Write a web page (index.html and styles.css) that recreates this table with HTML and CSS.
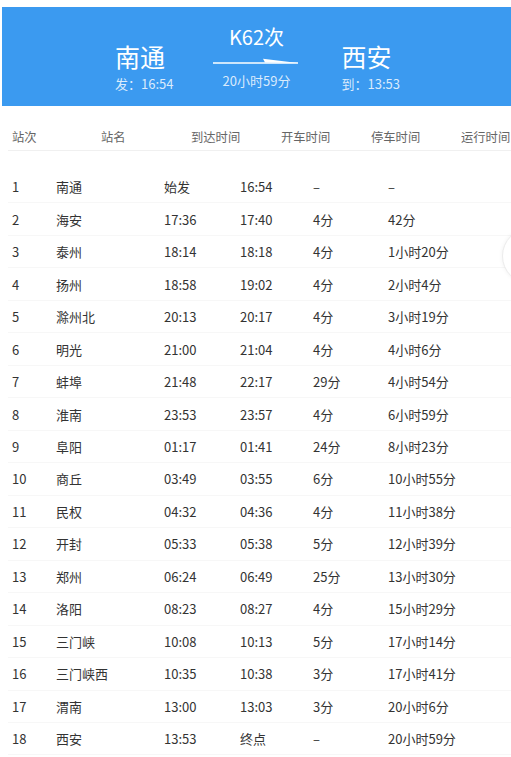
FILE: index.html
```html
<!DOCTYPE html>
<html lang="zh">
<head>
<meta charset="utf-8">
<link rel="stylesheet" href="styles.css">
</head>
<body>
<div class="page">
  <header class="banner">
    <div class="stop">
      <div class="city">南通</div>
      <div class="sub">发：16:54</div>
    </div>
    <div class="mid">
      <div class="train">K62次</div>
      <svg class="arrow" width="86" height="10" viewBox="0 0 86 10">
        <path d="M0 6 H85" stroke="#fff" stroke-width="1.6" fill="none"/>
        <path d="M50 1.8 L85 6 L52 5.6 Z" fill="#fff"/>
      </svg>
      <div class="sub">20小时59分</div>
    </div>
    <div class="stop">
      <div class="city">西安</div>
      <div class="sub">到：13:53</div>
    </div>
  </header>

  <div class="thead">
    <span>站次</span><span>站名</span><span>到达时间</span><span>开车时间</span><span>停车时间</span><span>运行时间</span>
  </div>

  <div class="tbody">
    <div class="row"><span>1</span><span>南通</span><span>始发</span><span>16:54</span><span>–</span><span>–</span></div>
    <div class="row"><span>2</span><span>海安</span><span>17:36</span><span>17:40</span><span>4分</span><span>42分</span></div>
    <div class="row"><span>3</span><span>泰州</span><span>18:14</span><span>18:18</span><span>4分</span><span>1小时20分</span></div>
    <div class="row"><span>4</span><span>扬州</span><span>18:58</span><span>19:02</span><span>4分</span><span>2小时4分</span></div>
    <div class="row"><span>5</span><span>滁州北</span><span>20:13</span><span>20:17</span><span>4分</span><span>3小时19分</span></div>
    <div class="row"><span>6</span><span>明光</span><span>21:00</span><span>21:04</span><span>4分</span><span>4小时6分</span></div>
    <div class="row"><span>7</span><span>蚌埠</span><span>21:48</span><span>22:17</span><span>29分</span><span>4小时54分</span></div>
    <div class="row"><span>8</span><span>淮南</span><span>23:53</span><span>23:57</span><span>4分</span><span>6小时59分</span></div>
    <div class="row"><span>9</span><span>阜阳</span><span>01:17</span><span>01:41</span><span>24分</span><span>8小时23分</span></div>
    <div class="row"><span>10</span><span>商丘</span><span>03:49</span><span>03:55</span><span>6分</span><span>10小时55分</span></div>
    <div class="row"><span>11</span><span>民权</span><span>04:32</span><span>04:36</span><span>4分</span><span>11小时38分</span></div>
    <div class="row"><span>12</span><span>开封</span><span>05:33</span><span>05:38</span><span>5分</span><span>12小时39分</span></div>
    <div class="row"><span>13</span><span>郑州</span><span>06:24</span><span>06:49</span><span>25分</span><span>13小时30分</span></div>
    <div class="row"><span>14</span><span>洛阳</span><span>08:23</span><span>08:27</span><span>4分</span><span>15小时29分</span></div>
    <div class="row"><span>15</span><span>三门峡</span><span>10:08</span><span>10:13</span><span>5分</span><span>17小时14分</span></div>
    <div class="row"><span>16</span><span>三门峡西</span><span>10:35</span><span>10:38</span><span>3分</span><span>17小时41分</span></div>
    <div class="row"><span>17</span><span>渭南</span><span>13:00</span><span>13:03</span><span>3分</span><span>20小时6分</span></div>
    <div class="row"><span>18</span><span>西安</span><span>13:53</span><span>终点</span><span>–</span><span>20小时59分</span></div>
  </div>

  <div class="fab"></div>
</div>
</body>
</html>
```

FILE: styles.css
```css
* { box-sizing: border-box; }
html, body {
  margin: 0;
  padding: 0;
  background: #fff;
}
body {
  font-family: "Noto Sans CJK SC", "Noto Sans", sans-serif;
  color: #333;
  width: 511px;
  height: 757px;
  overflow: hidden;
}
.page {
  position: relative;
  padding-top: 7px;
}
.banner {
  margin-left: 2px;
  height: 99px;
  background: #3b9af0;
  display: flex;
  align-items: flex-start;
  padding-left: 113px;
  color: #fff;
}
.stop {
  display: flex;
  flex-direction: column;
  padding-top: 32px;
}
.stop + .mid { margin-left: 40px; }
.mid + .stop { margin-left: 42px; }
.city {
  font-size: 25px;
  line-height: 34px;
}
.sub {
  font-size: 13px;
  line-height: 18px;
  color: rgba(255,255,255,0.82);
  margin-top: 2px;
  white-space: nowrap;
}
.mid {
  display: flex;
  flex-direction: column;
  align-items: center;
  width: 86px;
  padding-top: 17px;
}
.train {
  font-size: 20px;
  line-height: 26px;
}
.arrow {
  display: block;
  margin-top: 7px;
}
.mid .sub { margin-top: 5px; }

.thead {
  margin-top: 17px;
  margin-left: 8px;
  height: 28px;
  display: grid;
  grid-template-columns: 89px 90px 90px 90px 90px 49px;
  padding-left: 4px;
  align-items: center;
  font-size: 12.3px;
  color: #666;
  border-bottom: 1px solid #f0f0f0;
  white-space: nowrap;
}
.tbody {
  margin-top: 20px;
  margin-left: 8px;
}
.row {
  display: grid;
  grid-template-columns: 44px 108px 76px 73px 75px 1fr;
  padding-left: 4px;
  height: 32.47px;
  align-items: center;
  font-size: 13px;
  color: #333;
  border-bottom: 1px solid #f7f7f7;
  white-space: nowrap;
}
.fab {
  position: absolute;
  left: 502px;
  top: 228px;
  width: 56px;
  height: 56px;
  border-radius: 50%;
  background: #fff;
  border: 1px solid #ececec;
  box-shadow: 0 0 4px rgba(0,0,0,0.06);
}
```
